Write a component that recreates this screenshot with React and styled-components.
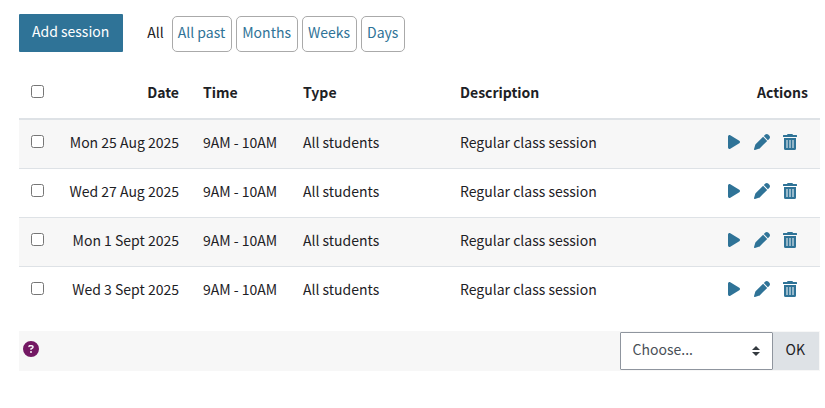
import React, { useState } from 'react';
import styled, { createGlobalStyle } from 'styled-components';
import { FaPlay, FaPen, FaCircleQuestion } from 'react-icons/fa6';

const GlobalStyle = createGlobalStyle`
  *, *::before, *::after {
    box-sizing: border-box;
  }

  body {
    margin: 0;
    background: #fff;
    color: #1d2125;
    font-family: 'Noto Sans CJK SC', 'Noto Sans', sans-serif;
    font-size: 14px;
    line-height: 24px;
  }

  button, select {
    font: inherit;
  }
`;

const Page = styled.main`
  padding: 14px 5px 14px 19px;
`;

const Toolbar = styled.div`
  display: flex;
  align-items: flex-end;
  gap: 24px;
`;

const AddButton = styled.button`
  padding: 5px 14px 9px 13px;
  border: 0;
  border-radius: 1px;
  background: #2f7397;
  color: #fff;
  cursor: pointer;
`;

const Filters = styled.nav`
  display: flex;
  gap: 4px;
`;

const CurrentFilter = styled.span`
  padding: 4px 4px 8px 0;
`;

const FilterLink = styled.a`
  padding: 3px 6px 7px 5px;
  border: 1px solid #aaa;
  border-radius: 5px;
  color: #2f7397;
  text-decoration: none;
`;

const Table = styled.table`
  width: 100%;
  margin: 18px 0 16px;
  border-spacing: 0;
  white-space: nowrap;
`;

const HeadCell = styled.th`
  width: ${props => props.width || 'auto'};
  padding: 10px 12px 14px;
  border-bottom: 2px solid #dee2e6;
  text-align: ${props => props.align || 'left'};
  vertical-align: top;
  font-weight: 700;
`;

const Row = styled.tr`
  &:nth-child(odd) {
    background: #f7f7f7;
  }

  & + & > td {
    border-top: 1px solid #dee2e6;
  }
`;

const Cell = styled.td`
  padding: 10px 12px 14px;
  text-align: ${props => props.align || 'left'};
  vertical-align: top;
`;

const Checkbox = styled.input`
  display: block;
  width: 13px;
  height: 13px;
  margin: 5px 0 0;
`;

const Actions = styled.div`
  display: flex;
  justify-content: flex-end;
  gap: 12px;
  padding-right: 10px;
`;

const ActionLink = styled.a`
  display: flex;
  align-items: center;
  height: 24px;
  color: #2f7397;
`;

const Footer = styled.div`
  display: flex;
  align-items: flex-start;
  justify-content: space-between;
  padding: 1px 1px 1px 4px;
  background: #f7f7f7;
`;

const HelpButton = styled.button`
  display: flex;
  padding: 9px 0 0;
  border: 0;
  background: none;
  color: #731863;
  cursor: pointer;
`;

const BulkForm = styled.form`
  display: flex;
`;

const SelectWrap = styled.div`
  position: relative;
`;

const Select = styled.select`
  display: block;
  width: 153px;
  height: 38px;
  padding: 3px 28px 7px 12px;
  border: 1px solid #8f959e;
  border-radius: 1px;
  appearance: none;
  background: #fff;
  color: #495057;
`;

const SelectArrows = styled.svg`
  position: absolute;
  top: 14px;
  right: 13px;
  pointer-events: none;
`;

const OkButton = styled.button`
  padding: 5px 14px 9px 13px;
  border: 0;
  background: #dee2e6;
  color: #1d2125;
  cursor: pointer;
`;

const TrashIcon = () => (
  <svg width="16" height="16" viewBox="0 0 16 16" fill="currentColor" aria-hidden="true">
    <path d="M5.6 0h4.8l.6 1h3.5a.5.5 0 0 1 .5.5V3H1V1.5a.5.5 0 0 1 .5-.5H5z" />
    <path
      fillRule="evenodd"
      d="M2 4h12v10.500a1.500 1.500 0 0 1-1.500 1.500h-9A1.500 1.500 0 0 1 2 14.500zM4.500 6v8h1V6zM7.500 6v8h1V6zM10.500 6v8h1V6z"
    />
  </svg>
);

const sessions = [
  { id: 1, date: 'Mon 25 Aug 2025' },
  { id: 2, date: 'Wed 27 Aug 2025' },
  { id: 3, date: 'Mon 1 Sept 2025' },
  { id: 4, date: 'Wed 3 Sept 2025' },
].map(session => ({
  ...session,
  time: '9AM - 10AM',
  type: 'All students',
  description: 'Regular class session',
}));

const filters = ['All past', 'Months', 'Weeks', 'Days'];

const App = () => {
  const [selected, setSelected] = useState([]);

  const toggleAll = (e) => {
    setSelected(e.target.checked ? sessions.map(s => s.id) : []);
  };

  const toggle = (id) => {
    setSelected(prev => (prev.includes(id) ? prev.filter(x => x !== id) : [...prev, id]));
  };

  return (
    <>
      <GlobalStyle />
      <Page>
        <Toolbar>
          <AddButton type="button">Add session</AddButton>
          <Filters aria-label="View">
            <CurrentFilter>All</CurrentFilter>
            {filters.map(name => (
              <FilterLink key={name} href="#">{name}</FilterLink>
            ))}
          </Filters>
        </Toolbar>

        <Table>
          <thead>
            <tr>
              <HeadCell width="37px">
                <Checkbox
                  type="checkbox"
                  aria-label="Select all sessions"
                  checked={selected.length === sessions.length}
                  onChange={toggleAll}
                />
              </HeadCell>
              <HeadCell width="135px" align="right">Date</HeadCell>
              <HeadCell width="100px">Time</HeadCell>
              <HeadCell width="157px">Type</HeadCell>
              <HeadCell>Description</HeadCell>
              <HeadCell width="118px" align="right">Actions</HeadCell>
            </tr>
          </thead>
          <tbody>
            {sessions.map(session => (
              <Row key={session.id}>
                <Cell>
                  <Checkbox
                    type="checkbox"
                    aria-label={`Select ${session.date}`}
                    checked={selected.includes(session.id)}
                    onChange={() => toggle(session.id)}
                  />
                </Cell>
                <Cell align="right">{session.date}</Cell>
                <Cell>{session.time}</Cell>
                <Cell>{session.type}</Cell>
                <Cell>{session.description}</Cell>
                <Cell>
                  <Actions>
                    <ActionLink href="#" aria-label="Take attendance"><FaPlay size={16} /></ActionLink>
                    <ActionLink href="#" aria-label="Edit session"><FaPen size={16} /></ActionLink>
                    <ActionLink href="#" aria-label="Delete session"><TrashIcon /></ActionLink>
                  </Actions>
                </Cell>
              </Row>
            ))}
          </tbody>
        </Table>

        <Footer>
          <HelpButton type="button" aria-label="Help">
            <FaCircleQuestion size={16} />
          </HelpButton>
          <BulkForm onSubmit={e => e.preventDefault()}>
            <SelectWrap>
              <Select aria-label="With selected sessions" defaultValue="">
                <option value="">Choose...</option>
                <option value="delete">Delete</option>
                <option value="duration">Change duration</option>
              </Select>
              <SelectArrows width="8" height="10" viewBox="0 0 4 5" aria-hidden="true">
                <path fill="#343a40" d="M2 0L0 2h4zm0 5L0 3h4z" />
              </SelectArrows>
            </SelectWrap>
            <OkButton type="submit">OK</OkButton>
          </BulkForm>
        </Footer>
      </Page>
    </>
  );
};

export default App;
